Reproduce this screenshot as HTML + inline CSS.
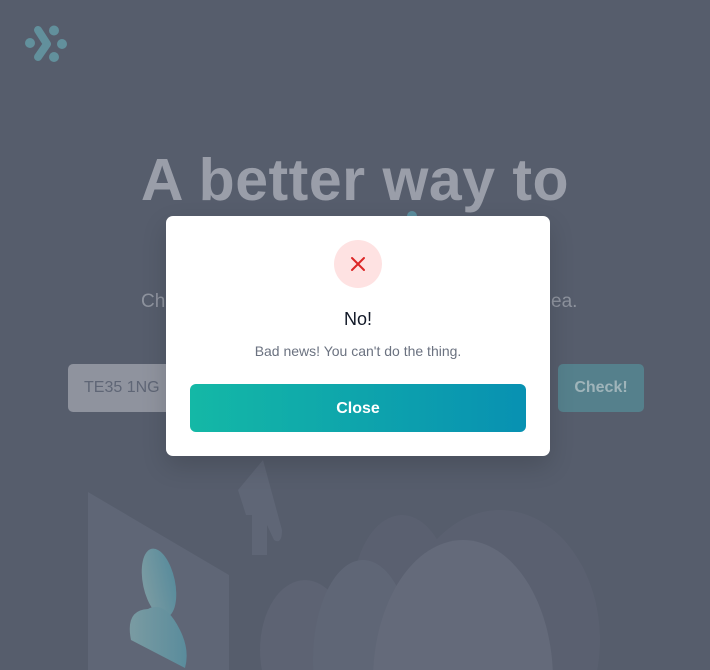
<!DOCTYPE html>
<html><head><style>
html,body{margin:0;padding:0;width:710px;height:670px;overflow:hidden;background:#565d6c;font-family:"Liberation Sans",sans-serif;position:relative}
.abs{position:absolute}
h1{position:absolute;left:0;width:710px;top:140px;margin:0;text-align:center;font-size:59px;font-weight:bold;letter-spacing:0.5px;color:#9a9ea9;line-height:80px}
.sub{top:291px;font-size:19px;color:#8e939e}
.input{left:68px;top:364px;width:160px;height:48px;background:#8f939e;border-radius:5px}
.check{left:558px;top:364px;width:86px;height:48px;background:#55808c;border-radius:5px;color:#9fb4ba;font-weight:bold;font-size:16px;line-height:48px;text-align:center}
.modal{left:166px;top:216px;width:384px;height:240px;background:#fff;border-radius:7px;box-shadow:0 10px 25px rgba(0,0,0,.15)}
.btn{position:absolute;left:24px;top:168px;width:336px;height:48px;border-radius:6px;background:linear-gradient(90deg,#14b8a6,#0891b2);color:#fff;font-weight:bold;font-size:16px;line-height:50px;text-align:center}
</style></head><body>
<svg class="abs" style="left:0;top:0" width="710" height="670">
<defs>
<linearGradient id="g1" x1="0" x2="1"><stop offset="0" stop-color="#7a9ba2"/><stop offset="1" stop-color="#5a8c9c"/></linearGradient>
</defs>
<g fill="#62909c"><circle cx="30" cy="43" r="5"/><circle cx="54" cy="30.5" r="5"/><circle cx="62" cy="44" r="5"/><circle cx="54" cy="57" r="5"/></g>
<path d="M38 30 L47 44 L38 57" stroke="#62909c" stroke-width="8" fill="none" stroke-linecap="round" stroke-linejoin="round"/>
<polygon points="88,492 229,575 229,670 88,670" fill="#5f6676"/>
<path d="M263 460 L238 490 L246 515 L252 515 L252 555 L267 555 L267 525 L274 540 Q282 545 282 530 Z" fill="#5f6676"/>
<ellipse cx="159" cy="583" rx="16" ry="35" transform="rotate(-12 159 583)" fill="url(#g1)"/>
<path d="M148 609 Q125 610 131 640 L185 668 Q190 650 180 630 Q165 600 148 609 Z" fill="url(#g1)"/>
<ellipse cx="402" cy="600" rx="50" ry="85" fill="#5a6070"/>
<ellipse cx="500" cy="640" rx="100" ry="130" fill="#5a6070"/>
<ellipse cx="305" cy="650" rx="45" ry="70" fill="#5d6373"/>
<ellipse cx="363" cy="660" rx="50" ry="100" fill="#5f6676"/>
<ellipse cx="463" cy="680" rx="90" ry="140" fill="#646a7a"/>
<circle cx="412" cy="216" r="5" fill="#5a8c9c"/>
</svg>
<h1>A better way to</h1>
<div class="abs sub" style="left:141px">Ch</div>
<div class="abs sub" style="left:551px">ea.</div>
<div class="abs input"><span style="position:absolute;left:16px;top:15px;color:#5f6676;font-size:16px">TE35 1NG</span></div>
<div class="abs check">Check!</div>
<div class="abs modal">
<div style="position:absolute;left:168px;top:24px;width:48px;height:48px;border-radius:50%;background:#fee2e2"></div>
<svg style="position:absolute;left:184px;top:40px" width="16" height="16"><path d="M2 2L14 14M14 2L2 14" stroke="#dc2626" stroke-width="2" stroke-linecap="round"/></svg>
<div style="position:absolute;left:0;width:384px;top:93px;text-align:center;font-size:18px;color:#111827">No!</div>
<div style="position:absolute;left:0;width:384px;top:127px;text-align:center;font-size:14px;color:#6b7280">Bad news! You can't do the thing.</div>
<div class="btn">Close</div>
</div>
</body></html>
